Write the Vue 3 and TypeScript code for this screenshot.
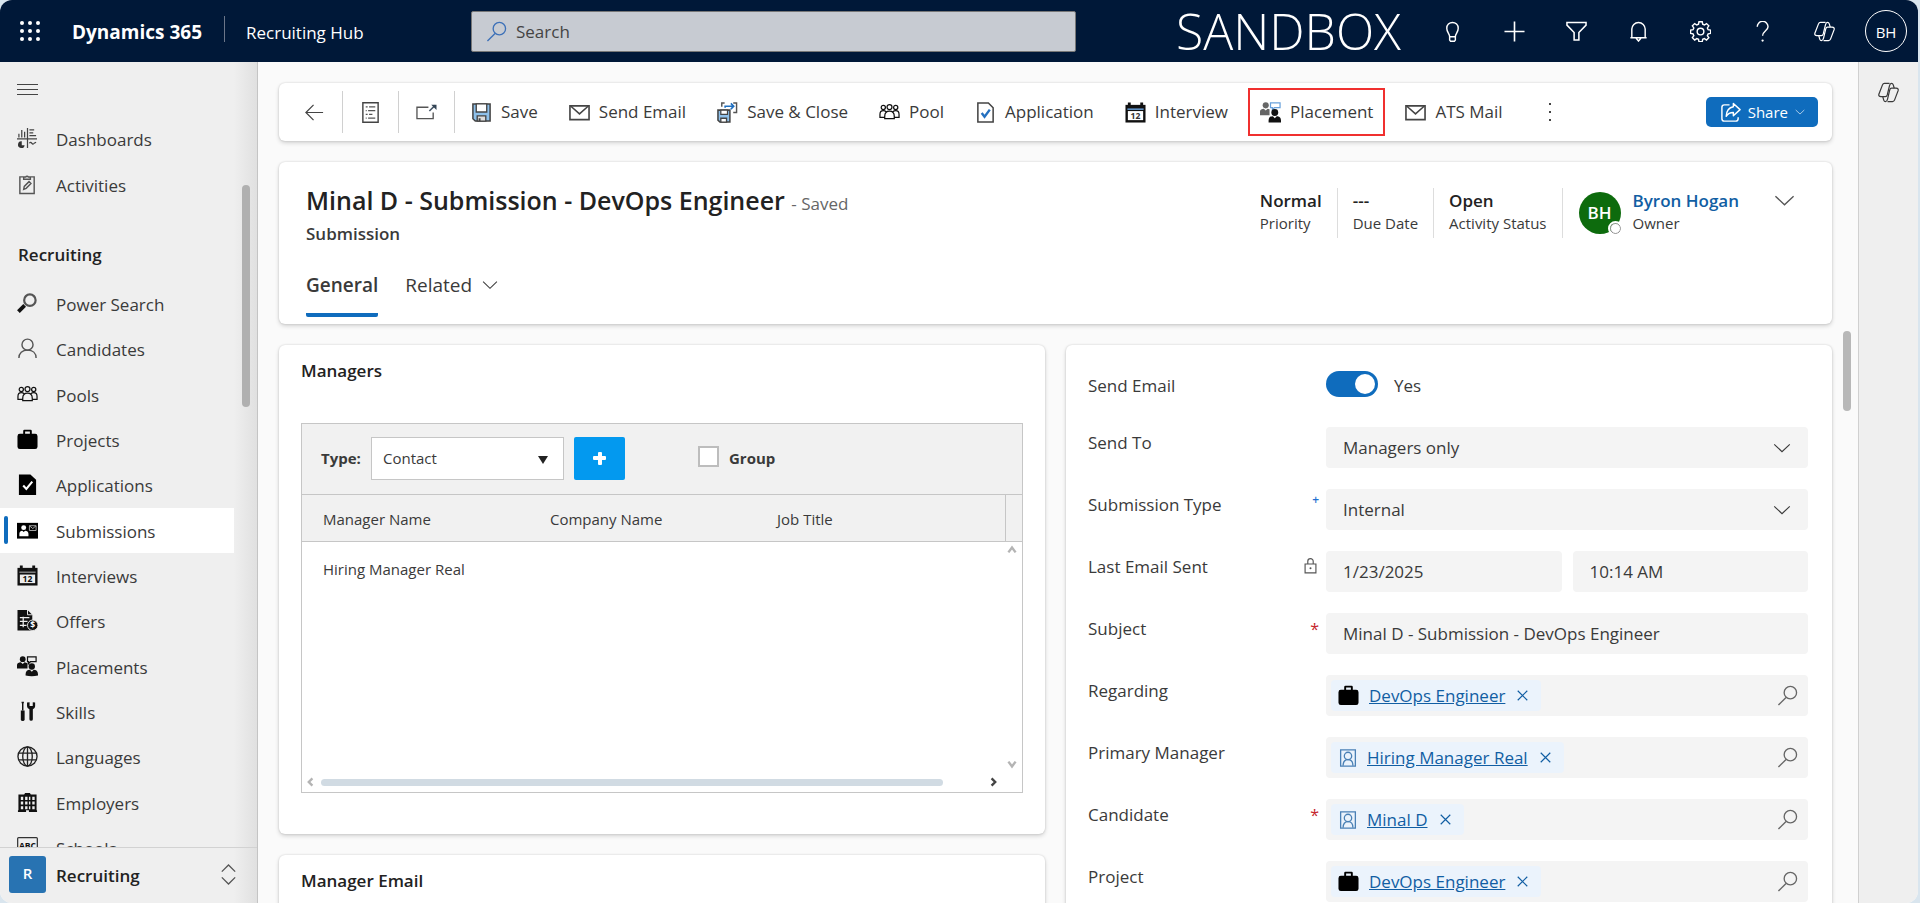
<script setup lang="ts">
import { ref } from 'vue'

interface NavItem {
  label: string
  icon: string
}

interface Command {
  label: string
  icon: string
  highlighted?: boolean
}

interface LookupField {
  id: string
  label: string
  value: string
  icon: string
  required?: boolean
}

const icons: Record<string, string> = {
  dashboards:
    '<g fill="none" stroke="#444" stroke-width="1.300"><path d="M0 11.500h21M11 0v21M2 10V6M5 10V2M8 10V4M13 2h5M13 5h4M13 8h7M13 16c2-3 3 3 5 0l2-1"/></g><path d="M5 14v4h3a3.500 3.500 0 1 1-3-4z" fill="#333"/>',
  activities:
    '<g fill="none" stroke="#555" stroke-width="1.500"><path d="M7 3H3v17.500h15V3h-4M7 5.500V3.200h2a1.800 1.800 0 0 1 3 0h2v2.300zM7 16l.6-3 5-5 2 2-5 5z"/></g>',
  powerSearch:
    '<circle cx="13.500" cy="7.500" r="6" fill="none" stroke="#555" stroke-width="2.300"/><path d="M1.500 19.500l6.500-6.500" stroke="#111" stroke-width="4"/>',
  person:
    '<g fill="none" stroke="#555" stroke-width="1.500"><circle cx="11" cy="7" r="5.800"/><path d="M2 21c0-5 3.500-8.300 9-8.300s9 3.300 9 8.300"/></g>',
  people:
    '<g fill="none" stroke="#111" stroke-width="1.300"><circle cx="4.500" cy="5.800" r="2.200"/><circle cx="17.500" cy="5.800" r="2.200"/><circle cx="11" cy="5.300" r="2.600"/><path d="M6 17.500v-2.500c0-4 2-5.500 5-5.500s5 1.500 5 5.500v2.500zM5.500 16H1v-3c0-2.500 1.300-4 3.500-4 1.500 0 2.300.5 3 1.300M16.500 16H21v-3c0-2.500-1.300-4-3.500-4-1.500 0-2.300.5-3 1.300"/></g>',
  briefcase:
    '<path d="M3 5h3.500V2A1.300 1.300 0 0 1 7.800.700h6.400A1.300 1.300 0 0 1 15.500 2v3H19a2.500 2.500 0 0 1 2.500 2.500v11A2.500 2.500 0 0 1 19 21H3a2.500 2.500 0 0 1-2.500-2.500v-11A2.500 2.500 0 0 1 3 5zm5.500 0h5V2.700h-5z" fill="#000" fill-rule="evenodd"/>',
  application:
    '<path d="M2 .5h12L20 6v16H2z" fill="#000"/><path d="M6.500 12l3.300 3.600L16 8" fill="none" stroke="#fff" stroke-width="2.200"/>',
  submission:
    '<path d="M0 3h22v16.500H0z" fill="#000"/><circle cx="7" cy="8" r="2.600" fill="#fff"/><path d="M2.500 17v-2.500c0-2 1.500-3.300 3-3.300l1.500 1.500 1.500-1.500c2 0 3.500 1.300 3.500 3.300V17z" fill="#fff"/><path d="M13 6h7v5h-7zM13 6l3.500 3L20 6" fill="none" stroke="#aaa"/>',
  calendar:
    '<path d="M.500 3h21v18.500h-21z" fill="#111"/><path d="M3 .5h3v5H3zM16 .5h3v5h-3z" fill="#111"/><path d="M2.500 7.500h17" stroke="#bbb" stroke-width="1"/><path d="M3 10h16v9H3z" fill="#eee"/><text x="11" y="18" font-size="9" font-weight="700" text-anchor="middle" fill="#111" font-family="Open Sans, sans-serif">12</text>',
  offer:
    '<path d="M.500 0H11l5 5v16.500H.500z" fill="#111"/><path d="M11 0v5h5" fill="none" stroke="#eee"/><path d="M3 8h10M3 12h8M3 16h7M6.500 7v11" stroke="#eee" stroke-width="1.300"/><circle cx="16.500" cy="16" r="5.500" fill="#111" stroke="#eee"/><text x="16.500" y="19.300" font-size="9" font-weight="700" text-anchor="middle" fill="#fff" font-family="Open Sans, sans-serif">$</text>',
  placement:
    '<circle cx="6" cy="3.300" r="3" fill="#111"/><path d="M0 13V9.500C0 7.500 2 6.500 4 6.500l2 2 2-2 3 1v5.500z" fill="#111"/><path d="M11 1h9v5h-6l-2 2V6h-1z" fill="none" stroke="#111" stroke-width="1.300"/><circle cx="15.500" cy="11" r="3.300" fill="#111"/><path d="M9 19c0-3 2-4.500 4.500-4.500l2 2 2-2c2.500 0 4.500 1.500 4.500 4.500v1.500q-6.500 1.500-13 0z" fill="#111"/>',
  placementCmd:
    '<circle cx="6" cy="3.500" r="3.200" fill="#666"/><path d="M0 14v-4c0-2 2-3 4-3l2 2 2-2 2 .6V14z" fill="#666"/><path d="M11 1h10v5h-6l-2 2V6h-2z" fill="#fff" stroke="#6aa2dc" stroke-width="1.300"/><circle cx="15.500" cy="11" r="3.600" fill="#111"/><path d="M9 19.500c0-3.500 2-4.500 4.500-4.500l2 2 2-2c2.500 0 4.500 1 4.500 4.500v2H9z" fill="#111"/>',
  skills:
    '<path d="M6 1v9M4.800 1.500h2.400" stroke="#111" stroke-width="1.500"/><path d="M4 10h4v9a2 2 0 0 1-4 0z" fill="#111"/><path d="M10.500 1.500v4q0 2 2.500 3.200V19a1.800 1.800 0 0 0 3.600 0V8.700Q19 7.500 19 5.500v-4l-2.500-.3v4h-3.300v-4z" fill="#111"/>',
  globe:
    '<g fill="none" stroke="#222" stroke-width="1.400"><circle cx="11" cy="11" r="10"/><ellipse cx="11" cy="11" rx="5" ry="10"/><path d="M2 7.500h18M2 14.500h18M11 1v20"/></g>',
  building:
    '<path d="M1.500 2.500h6l1-1.500h5l1 1.500h6V19H21v2h-8.500v-2h-3v2H1v-2h.5z" fill="#111"/><path d="M4 5h2.500v3.500H4zM8.500 5H11v3.500H8.500zM12.500 5H14v3.500h-1.500zM16 5h2.500v3.500H16zM4 10h2.500v3H4zM8.500 10H11v3H8.500zM12.500 10H14v3h-1.500zM16 10h2.500v3H16zM4 15h2.500v3H4zM8.500 15H11v3H8.500zM12.500 15H14v3h-1.500zM16 15h2.500v3H16z" fill="#eee"/>',
  school:
    '<rect x=".700" y=".700" width="20.600" height="19" rx="1" fill="none" stroke="#333" stroke-width="1.300"/><text x="11" y="12.500" font-size="9" font-weight="700" text-anchor="middle" fill="#111" font-family="Open Sans, sans-serif">ABC</text>',
  save:
    '<path d="M2 2h18v18H4.500L2 17.500z" fill="#8ec0ea" stroke="#444" stroke-width="1.600"/><path d="M5.500 2h11v8.500h-11z" fill="#fff" stroke="#444" stroke-width="1.400"/><path d="M6.500 14.500h9V20h-9z" fill="#ddd" stroke="#444" stroke-width="1.400"/><path d="M9 17v3" stroke="#444" stroke-width="2"/>',
  mail:
    '<path d="M1 4h20v14.500H1z" fill="#fff" stroke="#444" stroke-width="1.700"/><path d="M2 4.500l9 8 9-8" fill="none" stroke="#444" stroke-width="1.600"/>',
  saveClose:
    '<path d="M1 8.500h12.500V21H3l-2-2z" fill="#8ec0ea" stroke="#444" stroke-width="1.600"/><path d="M4 8.500h7v4.500H4z" fill="#fff" stroke="#444" stroke-width="1.300"/><path d="M4 17h6v4H4z" fill="#fff" stroke="#444" stroke-width="1.400"/><path d="M5 5V1h3M17 1h3.500v10H17" fill="none" stroke="#555" stroke-width="1.500"/><path d="M8.500 6V4.500H17M14.500 1.500l3 3-3 3" fill="none" stroke="#1f6fc0" stroke-width="1.700"/>',
  applicationCmd:
    '<path d="M3 1h11l5 5v15H3z" fill="#fff" stroke="#444" stroke-width="1.600"/><path d="M7 11.500l3 4L15.500 8" fill="none" stroke="#2470c0" stroke-width="2.500"/>',
  calendarCmd:
    '<path d="M.500 3h21v18.500h-21z" fill="#111"/><path d="M3 .5h3v5H3zM16 .5h3v5h-3z" fill="#111"/><path d="M2.500 7.500h17" stroke="#6aa2dc" stroke-width="1.500"/><path d="M3 9.500h16v9.500H3z" fill="#fff"/><text x="11" y="17.500" font-size="9" font-weight="700" text-anchor="middle" fill="#333" font-family="Open Sans, sans-serif">12</text>',
  back: '<path d="M20 11H2M10 3l-8 8 8 8" fill="none" stroke="#444" stroke-width="1.300"/>',
  form:
    '<path d="M3 .800h16v20.400H3z" fill="none" stroke="#444" stroke-width="1.500"/><path d="M6 5h2M9.500 5H16M6 9h1M8.500 9H16M6 13h2M9.500 13H13M6 17h1M8.500 17H16" stroke="#555" stroke-width="1.300"/>',
  popout:
    '<path d="M13 5.500H1v12h17V11" fill="none" stroke="#555" stroke-width="1.400"/><path d="M14 9.500l6-6" stroke="#456" stroke-width="1.600"/><path d="M16 3h5.500v5.500z" fill="#345"/>',
  search:
    '<circle cx="14" cy="8" r="6.500" fill="none" stroke="currentColor" stroke-width="1.400"/><path d="M9.500 13L1.500 21" stroke="currentColor" stroke-width="1.400"/>',
  chevron: '<path d="M1.500 6.500l9.500 9 9.500-9" fill="none" stroke="currentColor" stroke-width="1.400"/>',
  bulb:
    '<path d="M8 16.500c0-3.500-3-4.500-3-9a6 6 0 0 1 12 0c0 4.500-3 5.500-3 9zM8 16.500V20l1 1.200h4l1-1.200v-3.500" fill="none" stroke="currentColor" stroke-width="1.500"/>',
  plus: '<path d="M11 .500v21M.500 11h21" stroke="currentColor" stroke-width="1.700"/>',
  filter:
    '<path d="M1 1.500h20v2.800l-7.500 7.700v8H8.500v-8L1 4.300z" fill="none" stroke="currentColor" stroke-width="1.600"/>',
  bell:
    '<path d="M4 17.500V8.500a7 7 0 0 1 14 0v9M2.500 17.500h17M8.500 18l2.500 3 2.500-3" fill="none" stroke="currentColor" stroke-width="1.500"/>',
  gear:
    '<g fill="none" stroke="currentColor" stroke-width="1.500"><circle cx="11" cy="11" r="3.500"/><path d="M9.300 1h3.400l.5 2.600 1.800.8 2.200-1.500 2.400 2.400-1.500 2.200.8 1.800 2.600.5v3.400l-2.600.5-.8 1.800 1.500 2.200-2.400 2.400-2.200-1.500-1.800.8-.5 2.600H9.300l-.5-2.600-1.800-.8-2.200 1.500-2.400-2.400 1.500-2.200-.8-1.800L.500 13.200V9.800l2.600-.5.800-1.800-1.500-2.200 2.400-2.400L7 4.400l1.800-.8z" transform="translate(.1 -.2)"/></g>',
  help:
    '<path d="M5.500 6a5.500 5.500 0 0 1 11.300 0c0 4-5.700 4.500-5.700 9.500" fill="none" stroke="currentColor" stroke-width="1.500"/><circle cx="11.100" cy="20.500" r="1.200" fill="currentColor"/>',
  copilot:
    '<g fill="none" stroke="currentColor" stroke-width="1.300" stroke-linejoin="round"><path d="M12 1.500H6.800Q5.300 1.500 4.700 3L1 12.500Q.2 15.300 3 15.300h4.700Q9.200 15.300 9.700 13.500L12 4Q12.600 1.500 14 1.500q1.500 0 2 1.500l1 3.500"/><path d="M10 20.500h5.200q1.500 0 2.100-1.500L21 9.300Q21.800 6.500 19 6.500h-4.700Q12.800 6.500 12.300 8.300L10 18Q9.400 20.500 8 20.500q-1.500 0-2-1.500l-1-3.700"/></g>',
  share:
    '<path d="M10 3H4.500Q2 3 2 5.500v12Q2 20 4.500 20h12q2.500 0 2.500-2.500V16" fill="none" stroke="currentColor" stroke-width="1.500"/><path d="M14 1.500L21 8l-7 6.500V11q-5 0-7.500 4Q7 6 14 5z" fill="none" stroke="currentColor" stroke-width="1.500" stroke-linejoin="round"/>',
  lock:
    '<path d="M4 9h14v11.500H4zM7.500 9V5.500a3.500 3.500 0 0 1 7 0V9" fill="none" stroke="#555" stroke-width="1.500"/><circle cx="11" cy="14.500" r="1.300" fill="#555"/>',
  contact:
    '<g fill="none" stroke="#4a80b5" stroke-width="1.600"><path d="M2 1h18v20H2z"/><circle cx="11" cy="8.500" r="4.500"/><path d="M5 20.500c0-4.500 2-7.500 6-7.500s6 3 6 7.500"/></g>',
  close: '<path d="M4 4l14 14M18 4L4 18" stroke="currentColor" stroke-width="1.700"/>',
  updown:
    '<path d="M4 8l7-7 7 7M4 14l7 7 7-7" fill="none" stroke="#555" stroke-width="1.400"/>',
}

const topNav: NavItem[] = [
  { label: 'Dashboards', icon: 'dashboards' },
  { label: 'Activities', icon: 'activities' },
]

const recruitingNav: NavItem[] = [
  { label: 'Power Search', icon: 'powerSearch' },
  { label: 'Candidates', icon: 'person' },
  { label: 'Pools', icon: 'people' },
  { label: 'Projects', icon: 'briefcase' },
  { label: 'Applications', icon: 'application' },
  { label: 'Submissions', icon: 'submission' },
  { label: 'Interviews', icon: 'calendar' },
  { label: 'Offers', icon: 'offer' },
  { label: 'Placements', icon: 'placement' },
  { label: 'Skills', icon: 'skills' },
  { label: 'Languages', icon: 'globe' },
  { label: 'Employers', icon: 'building' },
  { label: 'Schools', icon: 'school' },
]
const activeNav = ref('Submissions')

const headerActions: NavItem[] = [
  { label: 'Ideas', icon: 'bulb' },
  { label: 'New', icon: 'plus' },
  { label: 'Filter', icon: 'filter' },
  { label: 'Notifications', icon: 'bell' },
  { label: 'Settings', icon: 'gear' },
  { label: 'Help', icon: 'help' },
  { label: 'Copilot', icon: 'copilot' },
]

const commands: Command[] = [
  { label: 'Save', icon: 'save' },
  { label: 'Send Email', icon: 'mail' },
  { label: 'Save & Close', icon: 'saveClose' },
  { label: 'Pool', icon: 'people' },
  { label: 'Application', icon: 'applicationCmd' },
  { label: 'Interview', icon: 'calendarCmd' },
  { label: 'Placement', icon: 'placementCmd', highlighted: true },
  { label: 'ATS Mail', icon: 'mail' },
]

const summary = [
  { value: 'Normal', label: 'Priority' },
  { value: '---', label: 'Due Date' },
  { value: 'Open', label: 'Activity Status' },
]

const lookups: LookupField[] = [
  { id: 'regarding', label: 'Regarding', value: 'DevOps Engineer', icon: 'briefcase' },
  { id: 'primary-manager', label: 'Primary Manager', value: 'Hiring Manager Real', icon: 'contact' },
  { id: 'candidate', label: 'Candidate', value: 'Minal D', icon: 'contact', required: true },
  { id: 'project', label: 'Project', value: 'DevOps Engineer', icon: 'briefcase' },
]

const sendEmail = ref(true)
const group = ref(false)
const managerType = ref('Contact')
const sendTo = ref('Managers only')
const submissionType = ref('Internal')
const subject = ref('Minal D - Submission - DevOps Engineer')
</script>

<template>
  <div class="app">
    <header class="topbar">
      <button class="waffle" aria-label="App launcher">
        <span v-for="n in 9" :key="n"></span>
      </button>
      <strong class="product">Dynamics 365</strong>
      <span class="topbar-rule"></span>
      <a class="app-name" href="#">Recruiting Hub</a>
      <div class="search-slot">
        <label class="search">
          <svg class="icon" viewBox="0 0 22 22" v-html="icons.search"></svg>
          <input type="text" placeholder="Search" aria-label="Search" />
        </label>
      </div>
      <span class="environment">SANDBOX</span>
      <div class="header-actions">
        <button v-for="a in headerActions" :key="a.label" :aria-label="a.label">
          <svg class="icon" viewBox="0 0 22 22" v-html="icons[a.icon]"></svg>
        </button>
        <button aria-label="Account"><span class="account">BH</span></button>
      </div>
    </header>

    <div class="body">
      <aside class="sidebar">
        <nav class="nav">
          <button class="menu-toggle" aria-label="Collapse navigation">
            <span></span><span></span><span></span>
          </button>
          <ul class="nav-list">
            <li v-for="item in topNav" :key="item.label">
              <a href="#" class="nav-link">
                <svg class="icon" viewBox="0 0 22 22" v-html="icons[item.icon]"></svg>
                <span>{{ item.label }}</span>
              </a>
            </li>
          </ul>
          <h2 class="nav-heading">Recruiting</h2>
          <ul class="nav-list recruiting">
            <li v-for="item in recruitingNav" :key="item.label">
              <a
                href="#"
                class="nav-link"
                :class="{ active: item.label === activeNav }"
                @click.prevent="activeNav = item.label"
              >
                <svg class="icon" viewBox="0 0 22 22" v-html="icons[item.icon]"></svg>
                <span>{{ item.label }}</span>
              </a>
            </li>
          </ul>
        </nav>
        <span class="nav-scroll"></span>
        <button class="area-switch">
          <span class="area-badge">R</span>
          <span class="area-name">Recruiting</span>
          <svg class="icon" viewBox="0 0 22 22" v-html="icons.updown"></svg>
        </button>
      </aside>

      <main class="main">
        <div class="card commands">
          <button class="tool" aria-label="Back">
            <svg class="icon" viewBox="0 0 22 22" v-html="icons.back"></svg>
          </button>
          <button class="tool" aria-label="Form">
            <svg class="icon" viewBox="0 0 22 22" v-html="icons.form"></svg>
          </button>
          <button class="tool" aria-label="Open in new window">
            <svg class="icon" viewBox="0 0 22 22" v-html="icons.popout"></svg>
          </button>
          <button v-for="c in commands" :key="c.label" class="command" :class="{ highlighted: c.highlighted }">
            <svg class="icon" viewBox="0 0 22 22" v-html="icons[c.icon]"></svg>{{ c.label }}
          </button>
          <button class="more" aria-label="More commands"><i></i><i></i><i></i></button>
          <button class="share">
            <svg class="icon" viewBox="0 0 22 22" v-html="icons.share"></svg>
            Share
            <svg class="icon caret" viewBox="0 0 22 22" v-html="icons.chevron"></svg>
          </button>
        </div>

        <section class="card record">
          <div class="record-top">
            <div class="record-title">
              <h1>Minal D - Submission - DevOps Engineer <small>- Saved</small></h1>
              <p>Submission</p>
            </div>
            <div class="summary">
              <div v-for="s in summary" :key="s.label" class="summary-item">
                <b>{{ s.value }}</b><span>{{ s.label }}</span>
              </div>
              <div class="owner">
                <span class="owner-avatar">BH<i class="presence"></i></span>
                <div class="owner-text">
                  <a href="#">Byron Hogan</a><span>Owner</span>
                </div>
              </div>
              <button class="expand" aria-label="Expand header">
                <svg class="icon" viewBox="0 0 22 22" v-html="icons.chevron"></svg>
              </button>
            </div>
          </div>
          <div class="tabs" role="tablist">
            <button class="tab selected" role="tab" aria-selected="true">General</button>
            <button class="tab" role="tab" aria-selected="false">
              Related <svg class="icon" viewBox="0 0 22 22" v-html="icons.chevron"></svg>
            </button>
          </div>
        </section>

        <div class="columns">
          <div class="left">
            <section class="card managers">
              <h2>Managers</h2>
              <div class="grid-box">
                <div class="grid-tools">
                  <label for="manager-type">Type:</label>
                  <div class="type-select">
                    <select id="manager-type" v-model="managerType">
                      <option>Contact</option>
                      <option>User</option>
                    </select>
                    <span class="triangle"></span>
                  </div>
                  <button class="add" aria-label="Add manager"></button>
                  <label class="group"><input v-model="group" type="checkbox" /> Group</label>
                </div>
                <table>
                  <thead>
                    <tr>
                      <th>Manager Name</th>
                      <th>Company Name</th>
                      <th>Job Title</th>
                      <th class="gutter"></th>
                    </tr>
                  </thead>
                  <tbody>
                    <tr>
                      <td>Hiring Manager Real</td>
                      <td></td>
                      <td></td>
                      <td></td>
                    </tr>
                  </tbody>
                </table>
                <div class="v-arrows">
                  <svg viewBox="0 0 10 10"><path d="M2 7l3-4 3 4" /></svg>
                  <svg viewBox="0 0 10 10"><path d="M2 3l3 4 3-4" /></svg>
                </div>
                <div class="h-scroll">
                  <svg viewBox="0 0 10 10"><path d="M7 2L4 5l3 3" /></svg>
                  <span class="track"><span class="thumb"></span></span>
                  <svg class="dark" viewBox="0 0 10 10"><path d="M3 2l3 3-3 3" /></svg>
                </div>
              </div>
            </section>
            <section class="card manager-email">
              <h2>Manager Email</h2>
            </section>
          </div>

          <section class="card form">
            <div class="row toggle-row">
              <label for="send-email">Send Email</label>
              <div class="control toggle">
                <input id="send-email" v-model="sendEmail" type="checkbox" role="switch" />
                <span>{{ sendEmail ? 'Yes' : 'No' }}</span>
              </div>
            </div>
            <div class="row">
              <label for="send-to">Send To</label>
              <div class="control">
                <div class="field">
                  <select id="send-to" v-model="sendTo">
                    <option>Managers only</option>
                  </select>
                  <svg class="icon" viewBox="0 0 22 22" v-html="icons.chevron"></svg>
                </div>
              </div>
            </div>
            <div class="row">
              <label for="submission-type">Submission Type<em class="recommended">+</em></label>
              <div class="control">
                <div class="field">
                  <select id="submission-type" v-model="submissionType">
                    <option>Internal</option>
                    <option>External</option>
                  </select>
                  <svg class="icon" viewBox="0 0 22 22" v-html="icons.chevron"></svg>
                </div>
              </div>
            </div>
            <div class="row">
              <label for="last-sent">
                Last Email Sent<svg class="icon lock" viewBox="0 0 22 22" v-html="icons.lock"></svg>
              </label>
              <div class="control pair">
                <input id="last-sent" class="field" type="text" value="1/23/2025" readonly />
                <input class="field" type="text" value="10:14 AM" aria-label="Last email sent time" readonly />
              </div>
            </div>
            <div class="row">
              <label for="subject">Subject<em>*</em></label>
              <div class="control"><input id="subject" v-model="subject" class="field" type="text" /></div>
            </div>
            <div v-for="l in lookups" :key="l.id" class="row">
              <label :for="l.id">{{ l.label }}<em v-if="l.required">*</em></label>
              <div class="control">
                <div class="field lookup">
                  <span class="chip">
                    <svg class="icon" :class="l.icon" viewBox="0 0 22 22" v-html="icons[l.icon]"></svg>
                    <a href="#">{{ l.value }}</a>
                    <button :aria-label="`Remove ${l.value}`">
                      <svg class="icon" viewBox="0 0 22 22" v-html="icons.close"></svg>
                    </button>
                  </span>
                  <button :id="l.id" class="lookup-search" :aria-label="`Search ${l.label}`">
                    <svg class="icon" viewBox="0 0 22 22" v-html="icons.search"></svg>
                  </button>
                </div>
              </div>
            </div>
          </section>
        </div>
        <span class="main-scroll"></span>
      </main>

      <aside class="rail">
        <button aria-label="Copilot">
          <svg class="icon" viewBox="0 0 22 22" v-html="icons.copilot"></svg>
        </button>
      </aside>
    </div>
  </div>
</template>

<style>
html,
body {
  margin: 0;
  background: #d9e5ee;
}
</style>

<style scoped>
* {
  box-sizing: border-box;
}

.app {
  display: flex;
  flex-direction: column;
  height: 100vh;
  margin-right: 2px;
  border-radius: 12px;
  overflow: hidden;
  background: #fafafa;
  color: #3a3a3a;
  font: 17px/24px 'Open Sans', 'Noto Sans', sans-serif;
}

button {
  padding: 0;
  border: 0;
  background: none;
  color: inherit;
  font: inherit;
  cursor: pointer;
}

input,
select {
  min-width: 0;
  margin: 0;
  border: 0;
  background: none;
  color: inherit;
  font: inherit;
  appearance: none;
}

a {
  color: inherit;
  text-decoration: none;
}

h1,
h2,
p,
ul {
  margin: 0;
  padding: 0;
  list-style: none;
}

.icon {
  display: block;
  flex: none;
  width: 21px;
  height: 21px;
}

/* Top bar */
.topbar {
  display: flex;
  flex: none;
  align-items: center;
  height: 62px;
  padding-right: 1px;
  background: #001838;
  color: #fff;
}

.waffle {
  display: grid;
  grid-template-columns: repeat(3, 4px);
  gap: 4px;
  margin: 0 32px 0 20px;
}

.waffle span {
  width: 4px;
  height: 4px;
  border-radius: 50%;
  background: #fff;
}

.product {
  width: 131px;
  padding-top: 2px;
  font-size: 19px;
  font-weight: 700;
  white-space: nowrap;
}

.topbar-rule {
  width: 1px;
  height: 26px;
  margin: 0 21px 4px;
  background: #6b7689;
}

.app-name {
  width: 122px;
  padding-top: 3px;
  white-space: nowrap;
}

.search-slot {
  flex: 1;
  padding: 0 100px 0 103px;
}

.search {
  display: flex;
  align-items: center;
  gap: 7px;
  height: 41px;
  padding: 0 14px;
  border: 1px solid #777;
  border-radius: 2px;
  background: #c7cbd2;
  color: #3c70b8;
}

.search input {
  flex: 1;
  padding-top: 2px;
  color: #444;
}

.search input::placeholder {
  color: #444;
  opacity: 1;
}

.environment {
  margin-right: 20px;
  font-size: 50px;
  font-weight: 300;
  line-height: 62px;
}

.header-actions {
  display: flex;
}

.header-actions button {
  display: grid;
  place-items: center;
  width: 62px;
  height: 62px;
}

.account {
  display: grid;
  place-items: center;
  width: 42px;
  height: 42px;
  padding-top: 2px;
  border: 1px solid #fff;
  border-radius: 50%;
  font-size: 15px;
}

/* Navigation */
.body {
  display: flex;
  flex: 1;
  min-height: 0;
}

.sidebar {
  position: relative;
  display: flex;
  flex: none;
  flex-direction: column;
  width: 258px;
  border-right: 1px solid #c4c4c4;
  background: linear-gradient(to right, #efefef 91%, #e0e0e0);
}

.nav {
  flex: 1;
  min-height: 0;
  overflow: hidden;
}

.menu-toggle {
  display: flex;
  flex-direction: column;
  gap: 4px;
  margin: 22px 17px 20px;
}

.menu-toggle span {
  width: 21px;
  height: 1px;
  background: #444;
}

.nav-list {
  display: grid;
  grid-auto-rows: 46px;
}

.nav-list.recruiting {
  grid-auto-rows: 1fr;
  height: 589px;
}

.nav-heading {
  padding: 35px 18px 13px;
  color: #222;
  font-size: 17px;
  font-weight: 600;
  line-height: 26px;
}

.nav-link {
  position: relative;
  display: flex;
  align-items: center;
  gap: 18px;
  width: 234px;
  height: 100%;
  padding-left: 17px;
}

.nav-link span {
  padding-top: 3px;
}

.nav-link.active {
  background: #fff;
}

.nav-link.active::before {
  content: '';
  position: absolute;
  left: 4px;
  top: 8px;
  bottom: 9px;
  width: 4px;
  border-radius: 2px;
  background: #0f6cbd;
}

.nav-scroll {
  position: absolute;
  top: 123px;
  right: 7px;
  width: 8px;
  height: 222px;
  border-radius: 4px;
  background: #b0b0b0;
}

.area-switch {
  display: flex;
  flex: none;
  align-items: center;
  gap: 10px;
  height: 56px;
  padding: 0 18px 2px 9px;
  border-top: 1px solid #d2d2d2;
  text-align: left;
}

.area-badge {
  display: grid;
  place-items: center;
  width: 37px;
  height: 37px;
  padding-bottom: 3px;
  border-radius: 3px;
  background: #2873b2;
  color: #fff;
  font-size: 15px;
  font-weight: 600;
}

.area-name {
  flex: 1;
  padding-top: 2px;
  color: #222;
  font-weight: 600;
}

/* Main area */
.main {
  position: relative;
  display: flex;
  flex: 1;
  flex-direction: column;
  gap: 21px;
  min-width: 0;
  padding: 21px 26px 0 21px;
  overflow: hidden;
}

.card {
  flex: none;
  border-radius: 6px;
  background: #fff;
  box-shadow: 0 0 2px rgba(0, 0, 0, 0.16), 0 2px 4px rgba(0, 0, 0, 0.16);
}

.main-scroll {
  position: absolute;
  top: 269px;
  right: 7px;
  width: 8px;
  height: 80px;
  border-radius: 4px;
  background: #b8b8b8;
}

.commands {
  display: flex;
  align-items: center;
  height: 58px;
  padding: 0 14px 0 8px;
}

.tool {
  display: grid;
  place-items: center;
  width: 56px;
  height: 42px;
  border-right: 1px solid #d0d0d0;
}

.command {
  display: flex;
  align-items: center;
  gap: 9px;
  height: 48px;
  margin-right: 9px;
  padding: 0 10px;
  border: 1px solid transparent;
  font-size: 17px;
  white-space: nowrap;
}

.tool + .command {
  margin-left: 5px;
}

.command.highlighted {
  border: 2px solid #f0302f;
}

.more {
  display: grid;
  gap: 6px;
  margin-left: 18px;
  padding: 8px;
}

.more i {
  width: 2px;
  height: 2px;
  background: #444;
}

.share {
  display: flex;
  align-items: center;
  gap: 7px;
  height: 30px;
  margin-left: auto;
  padding: 0 13px 0 14px;
  border-radius: 5px;
  background: #0f6cbd;
  color: #fff;
  font-size: 15px;
}

.share .caret {
  width: 10px;
  height: 10px;
}

/* Record header */
.record {
  height: 162px;
  padding: 24px 31px 0 27px;
}

.record-top {
  display: flex;
  justify-content: space-between;
  height: 86px;
}

.record-title h1 {
  color: #222;
  font-size: 25px;
  font-weight: 600;
  line-height: 28px;
  white-space: nowrap;
}

.record-title small {
  color: #666;
  font-size: 17px;
  font-weight: 400;
}

.record-title p {
  margin-top: 4px;
  font-size: 17px;
  font-weight: 600;
  line-height: 24px;
}

.summary {
  display: flex;
  align-items: flex-start;
  padding-top: 2px;
  font-size: 15px;
}

.summary-item,
.owner-text {
  display: flex;
  flex-direction: column;
  line-height: 22px;
  white-space: nowrap;
}

.summary-item {
  height: 50px;
  padding: 2px 15px 0;
  border-right: 1px solid #ddd;
}

.summary-item b,
.owner-text a {
  color: #222;
  font-size: 17px;
  font-weight: 600;
}

.owner {
  display: flex;
  gap: 12px;
  padding: 2px 0 0 16px;
}

.owner-avatar {
  position: relative;
  display: grid;
  place-items: center;
  width: 42px;
  height: 42px;
  margin-top: 2px;
  border-radius: 50%;
  background: #0d6b0d;
  color: #fff;
  font-size: 17px;
  font-weight: 600;
}

.presence {
  position: absolute;
  right: 0;
  bottom: 0;
  width: 11px;
  height: 11px;
  border: 1px solid #8a8a8a;
  border-radius: 50%;
  outline: 2px solid #fff;
  background: #fff;
}

.owner-text a {
  color: #115ea3;
}

.expand {
  margin: 2px 6px 0 35px;
  color: #555;
}

.tabs {
  display: flex;
  gap: 27px;
}

.tab {
  display: flex;
  align-items: center;
  gap: 10px;
  height: 45px;
  padding-bottom: 16px;
  border-bottom: 4px solid transparent;
  border-radius: 2px;
  font-size: 19px;
}

.tab.selected {
  border-bottom-color: #0f6cbd;
  font-weight: 600;
}

.tab .icon {
  width: 16px;
  height: 16px;
}

/* Form columns */
.columns {
  display: grid;
  grid-template-columns: 1fr 1fr;
  gap: 21px;
  align-items: start;
}

.left {
  display: grid;
  gap: 21px;
}

.managers {
  padding: 14px 22px 41px;
}

.card h2 {
  color: #222;
  font-size: 17px;
  font-weight: 600;
  line-height: 24px;
}

.grid-box {
  position: relative;
  display: flex;
  flex-direction: column;
  height: 370px;
  margin-top: 40px;
  border: 1px solid #c6c6c6;
  font-size: 15px;
}

.grid-tools {
  display: flex;
  align-items: center;
  height: 71px;
  padding: 0 0 2px 19px;
  border-bottom: 1px solid #c6c6c6;
  background: #f1f1f1;
  font-weight: 700;
}

.grid-tools > label:first-child {
  width: 50px;
}

.type-select {
  position: relative;
  display: flex;
  width: 193px;
  height: 43px;
  border: 1px solid #c6c6c6;
  background: #fff;
  font-weight: 400;
}

.type-select select {
  flex: 1;
  padding: 0 11px;
}

.triangle {
  position: absolute;
  top: 18px;
  right: 15px;
  border: 5px solid transparent;
  border-top: 8px solid #222;
  border-bottom: 0;
  pointer-events: none;
}

.add {
  display: grid;
  place-items: center;
  width: 51px;
  height: 43px;
  margin-left: 10px;
  border-radius: 2px;
  background: #0399ef;
}

.add::before,
.add::after {
  content: '';
  grid-area: 1 / 1;
  width: 13px;
  height: 4px;
  border-radius: 1px;
  background: #fff;
}

.add::after {
  width: 4px;
  height: 13px;
}

.group {
  display: flex;
  align-items: center;
  gap: 10px;
  margin-left: 73px;
}

.group input {
  width: 21px;
  height: 21px;
  margin-bottom: 4px;
  border: 2px solid #bdbdbd;
  background: #fff;
}

.group input:checked {
  background: #0f6cbd;
}

table {
  width: 100%;
  border-collapse: collapse;
  table-layout: fixed;
}

th,
td {
  height: 46px;
  padding: 2px 21px 0;
  font-weight: 400;
  text-align: left;
}

th {
  border-bottom: 1px solid #c6c6c6;
  background: #f1f1f1;
}

td {
  height: 54px;
}

.gutter {
  width: 17px;
  padding: 0;
  border-left: 1px solid #c6c6c6;
}

th:first-child,
th:nth-child(2) {
  width: 227px;
}

.v-arrows {
  position: absolute;
  top: 120px;
  right: 4px;
  bottom: 22px;
  display: flex;
  flex-direction: column;
  justify-content: space-between;
}

.grid-box path {
  fill: none;
  stroke: #b4b4b4;
  stroke-width: 2;
}

.v-arrows svg,
.h-scroll svg {
  flex: none;
  width: 12px;
  height: 12px;
}

.h-scroll {
  display: flex;
  align-items: center;
  gap: 5px;
  margin-top: auto;
  padding: 0 22px 4px 2px;
}

.grid-box .dark path {
  stroke: #444;
}

.track {
  flex: 1;
}

.thumb {
  display: block;
  width: 94%;
  height: 7px;
  border-radius: 4px;
  background: #d1dbe3;
}

.manager-email {
  height: 160px;
  padding: 14px 22px;
}

.form {
  display: grid;
  gap: 21px;
  padding: 20px 24px 21px 22px;
}

.row {
  display: grid;
  grid-template-columns: 238px 1fr;
  font-size: 17px;
}

.row > label {
  display: flex;
  justify-content: space-between;
  height: 32px;
  padding-right: 7px;
  line-height: 32px;
}

.row em {
  color: #c5262c;
  font-size: 16px;
  font-style: normal;
  line-height: 32px;
}

.row .recommended {
  color: #1f6fd0;
  font-size: 12px;
  font-weight: 600;
  line-height: 22px;
}

.lock {
  width: 17px;
  height: 17px;
  margin-top: 6px;
}

.toggle-row > label {
  height: 41px;
  line-height: 42px;
}

.toggle {
  display: flex;
  align-items: center;
  gap: 16px;
}

.toggle input {
  display: flex;
  justify-content: flex-start;
  align-items: center;
  width: 52px;
  height: 26px;
  margin-bottom: 3px;
  padding: 0 3px;
  border-radius: 13px;
  background: #888;
}

.toggle input:checked {
  justify-content: flex-end;
  background: #0f6cbd;
}

.toggle input::before {
  content: '';
  width: 20px;
  height: 20px;
  border-radius: 50%;
  background: #fff;
}

.field {
  display: flex;
  align-items: center;
  width: 100%;
  height: 41px;
  border-radius: 4px;
  background: #f4f4f4;
}

input.field {
  padding: 0 17px;
}

.field select {
  flex: 1;
  height: 100%;
  padding: 0 17px;
}

.field > .icon {
  width: 18px;
  height: 18px;
  margin-right: 17px;
  margin-left: -35px;
  pointer-events: none;
}

.pair {
  display: flex;
  gap: 11px;
}

.lookup {
  justify-content: space-between;
  padding: 0 10px 0 5px;
}

.chip {
  display: flex;
  align-items: center;
  gap: 10px;
  height: 31px;
  padding: 0 11px 0 7px;
  border-radius: 4px;
  background: #ebf3fc;
  color: #115ea3;
}

.chip a {
  text-decoration: underline;
}

.chip .contact {
  width: 18px;
  height: 18px;
  margin-left: 1px;
}

.chip button .icon {
  width: 15px;
  height: 15px;
}

.lookup-search {
  color: #666;
}

/* Side rail */
.rail {
  flex: none;
  width: 60px;
  border-left: 1px solid #d0d0d0;
  background: #efefef;
}

.rail button {
  display: block;
  margin: 20px auto;
}
</style>
